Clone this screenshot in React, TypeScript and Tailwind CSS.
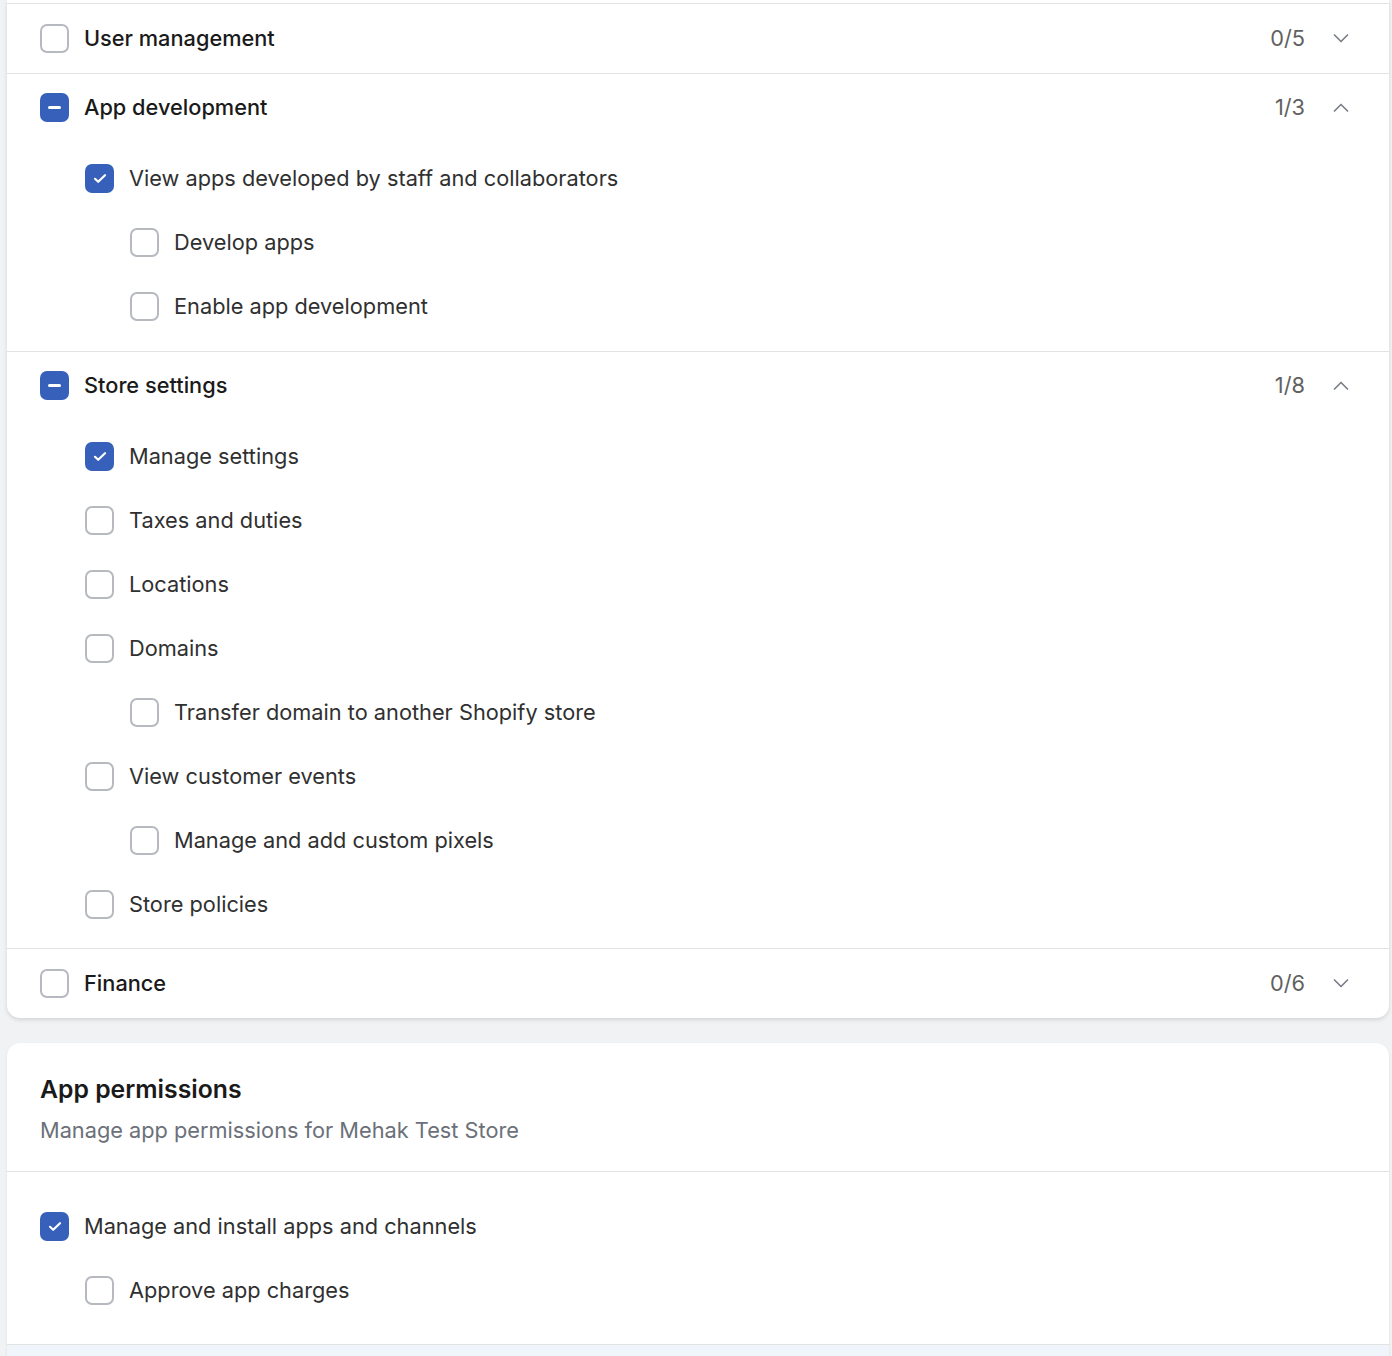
import type { ReactNode } from "react";

type Check = "on" | "off" | "mixed";

type Perm = { label: string; state: Check; level: 1 | 2 };

type Section = {
  title: string;
  state: Check;
  count: string;
  open: boolean;
  items: Perm[];
};

const sections: Section[] = [
  { title: "User management", state: "off", count: "0/5", open: false, items: [] },
  {
    title: "App development",
    state: "mixed",
    count: "1/3",
    open: true,
    items: [
      { label: "View apps developed by staff and collaborators", state: "on", level: 1 },
      { label: "Develop apps", state: "off", level: 2 },
      { label: "Enable app development", state: "off", level: 2 },
    ],
  },
  {
    title: "Store settings",
    state: "mixed",
    count: "1/8",
    open: true,
    items: [
      { label: "Manage settings", state: "on", level: 1 },
      { label: "Taxes and duties", state: "off", level: 1 },
      { label: "Locations", state: "off", level: 1 },
      { label: "Domains", state: "off", level: 1 },
      { label: "Transfer domain to another Shopify store", state: "off", level: 2 },
      { label: "View customer events", state: "off", level: 1 },
      { label: "Manage and add custom pixels", state: "off", level: 2 },
      { label: "Store policies", state: "off", level: 1 },
    ],
  },
  { title: "Finance", state: "off", count: "0/6", open: false, items: [] },
];

function Checkbox({ state }: { state: Check }) {
  if (state === "off") {
    return (
      <span className="size-[29px] shrink-0 rounded-[7px] border-2 border-[#b6b9bf] bg-white" />
    );
  }
  return (
    <span className="flex size-[29px] shrink-0 items-center justify-center rounded-[7px] bg-[#3660b9]">
      {state === "on" ? (
        <svg width="14" height="11" viewBox="0 0 14 11" fill="none">
          <path
            d="M2 5.8l3.2 3L12 2.2"
            stroke="white"
            strokeWidth="2.2"
            strokeLinecap="round"
            strokeLinejoin="round"
          />
        </svg>
      ) : (
        <span className="h-[3px] w-[13px] rounded-full bg-white" />
      )}
    </span>
  );
}

function Chevron({ up }: { up: boolean }) {
  return (
    <svg width="16" height="9" viewBox="0 0 16 9" fill="none" className="shrink-0">
      <path
        d={up ? "M1.5 8L8 1.5 14.5 8" : "M1.5 1L8 7.5 14.5 1"}
        stroke="#7b8088"
        strokeWidth="1.7"
        strokeLinecap="round"
        strokeLinejoin="round"
      />
    </svg>
  );
}

function Row({ state, children, className }: { state: Check; children: ReactNode; className?: string }) {
  return (
    <div className={`flex h-[29px] items-center gap-[15px] ${className ?? ""}`}>
      <Checkbox state={state} />
      {children}
    </div>
  );
}

function PermissionSection({ section }: { section: Section }) {
  return (
    <div
      className={`border-t border-[#e3e3e3] pl-[33px] pr-[40px] ${
        section.open ? "pb-[29.5px] pt-[19px]" : "pb-[20px] pt-[20px]"
      }`}
    >
      <div className="flex h-[29px] items-center justify-between">
        <Row state={section.state}>
          <span className="text-[21.75px] font-medium leading-[29px] text-[#1a1a1a]">{section.title}</span>
        </Row>
        <div className="flex items-center gap-[28px]">
          <span className="text-[21.75px] leading-[29px] text-[#616161]">{section.count}</span>
          <Chevron up={section.open} />
        </div>
      </div>
      {section.open && (
        <div className="mt-[42px] flex flex-col gap-[35px]">
          {section.items.map((item) => (
            <Row
              key={item.label}
              state={item.state}
              className={item.level === 2 ? "pl-[90px]" : "pl-[45px]"}
            >
              <span className="text-[21.75px] leading-[29px] text-[#303030]">{item.label}</span>
            </Row>
          ))}
        </div>
      )}
    </div>
  );
}

export default function App() {
  return (
    <div
      className="min-h-[1356px] bg-[#f1f2f4] pl-[7px] pr-[3px]"
      style={{ fontFamily: "Inter, 'Noto Sans', sans-serif" }}
    >
      <div className="overflow-hidden rounded-b-[13px] bg-white pt-[3px] shadow-[0_2px_4px_rgba(0,0,0,0.12)]">
        {sections.map((s) => (
          <PermissionSection key={s.title} section={s} />
        ))}
      </div>

      <div className="mt-[25px] overflow-hidden rounded-t-[13px] bg-white shadow-[0_1px_3px_rgba(0,0,0,0.08)]">
        <div className="px-[33px] pb-[26px] pt-[30px]">
          <h2 className="text-[24.75px] font-semibold leading-[32px] text-[#1a1a1a]">App permissions</h2>
          <p className="mt-[10px] text-[21.75px] leading-[30px] text-[#6b7079]">
            Manage app permissions for Mehak Test Store
          </p>
        </div>
        <div className="flex flex-col gap-[35px] border-t border-[#e3e3e3] px-[33px] pb-[39px] pt-[40px]">
          <Row state="on">
            <span className="text-[21.75px] leading-[29px] text-[#303030]">Manage and install apps and channels</span>
          </Row>
          <Row state="off" className="pl-[45px]">
            <span className="text-[21.75px] leading-[29px] text-[#303030]">Approve app charges</span>
          </Row>
        </div>
        <div className="h-[20px] border-t border-[#e3e3e3] bg-[#f0f4fb]" />
      </div>
    </div>
  );
}
